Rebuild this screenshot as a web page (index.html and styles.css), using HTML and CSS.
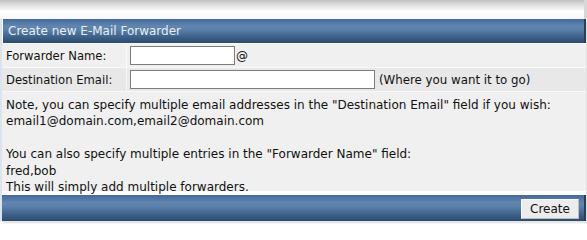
FILE: index.html
```html
<!DOCTYPE html>
<html>
<head>
<meta charset="utf-8">
<link rel="stylesheet" href="styles.css">
</head>
<body>
<div class="top-strip"></div>
<div class="panel">
  <div class="bar header">Create new E-Mail Forwarder</div>
  <div class="form-grid">
    <div class="cell label row-a">Forwarder Name:</div>
    <div class="cell field row-a"><input class="input short" type="text"><span class="after">@</span></div>
    <div class="cell label row-b">Destination Email:</div>
    <div class="cell field row-b"><input class="input long" type="text"><span class="after hint">(Where you want it to go)</span></div>
  </div>
  <div class="notes">
    <div>Note, you can specify multiple email addresses in the "Destination Email" field if you wish:</div>
    <div>email1@domain.com,email2@domain.com</div>
    <div class="blank">&nbsp;</div>
    <div>You can also specify multiple entries in the "Forwarder Name" field:</div>
    <div>fred,bob</div>
    <div>This will simply add multiple forwarders.</div>
  </div>
  <div class="bar footer"><button class="btn" type="button">Create</button></div>
</div>
</body>
</html>
```
FILE: styles.css
```css
html, body {
  margin: 0;
  padding: 0;
  background: #ffffff;
}
body {
  font-family: "DejaVu Sans", Verdana, sans-serif;
  font-size: 12px;
  color: #111;
  width: 587px;
  height: 229px;
  overflow: hidden;
}
.top-strip {
  height: 19px;
  background: linear-gradient(#c2c2c2 0%, #e4e4e4 30%, #ffffff 60%, #f7f7f7 100%);
  border-right: 3px solid #d8d8d8;
}
.panel {
  border-left: 2px solid #dbe3ec;
  margin-right: 1px;
  box-shadow: 2px 2px 2px rgba(0,0,0,0.12);
}
.bar {
  background: linear-gradient(#45699a 0%, #6186b0 30%, #5b80a9 45%, #3d6189 75%, #2c4c6e 100%);
  border-right: 2px solid #2a3f58;
}
.header {
  height: 24px;
  line-height: 24px;
  padding-left: 5px;
  color: #e9eef5;
  font-size: 12px;
  margin-left: 1px;
  box-sizing: border-box;
}
.form-grid {
  display: grid;
  grid-template-columns: 124px 1fr;
  column-gap: 1px;
  row-gap: 1px;
  background: #f9f9f9;
  padding-top: 1px;
  padding-bottom: 1px;
}
.cell {
  display: flex;
  align-items: center;
  height: 23px;
}
.row-a { background: #f0f0f0; }
.row-b { background: #e8e8e8; }
.label {
  padding-left: 4px;
  font-size: 11.6px;
}
.field {
  padding-left: 3px;
}
.input {
  box-sizing: border-box;
  height: 19px;
  border: 1px solid #7d7d7d;
  background: #fff;
  margin: 0;
  padding: 0 2px;
  font: inherit;
}
.short { width: 105px; }
.long { width: 245px; }
.after { margin-left: 1px; }
.hint { margin-left: 4px; font-size: 11.8px; }
.notes {
  background: #f0f0f0;
  padding: 5px 4px 0 4px;
  line-height: 16.4px;
  height: 99px;
  box-sizing: border-box;
}
.footer {
  height: 26px;
  display: flex;
  justify-content: flex-end;
  align-items: center;
  padding-right: 5px;
  margin-top: 4px;
  box-sizing: border-box;
}
.btn {
  height: 20px;
  width: 58px;
  background: #ececec;
  border: 1px solid #fafafa;
  border-right-color: #bcbcbc;
  border-bottom-color: #bcbcbc;
  font-family: inherit;
  font-size: 12px;
  color: #111;
  padding: 0;
  margin-top: 1px;
}
```
